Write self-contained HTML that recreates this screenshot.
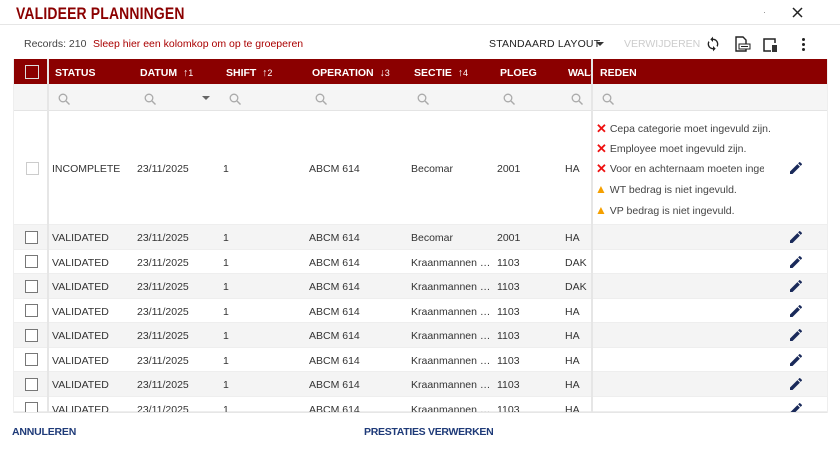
<!DOCTYPE html>
<html><head><meta charset="utf-8"><style>
*{box-sizing:border-box;margin:0;padding:0}
body{width:840px;height:450px;background:#fff;font-family:"Liberation Sans",sans-serif;position:relative;overflow:hidden;color:#333}
.a{position:absolute;white-space:nowrap}
.title{left:16px;top:4px;font-size:17px;font-weight:bold;color:#8b0000;transform:scaleX(.82);transform-origin:left;letter-spacing:.2px}
.hdr{left:13px;top:59px;width:815px;height:25px;background:#8b0000}
.h{color:#fff;font-size:10.5px;font-weight:bold;top:67px}
.fr{left:13px;top:84px;width:815px;height:27px;background:#f5f5f5;border-bottom:1px solid #e4e4e4}
.c{font-size:10.5px;color:#333}
.cb{width:13px;height:13px;border:1.5px solid #777;background:#fff}
.row{left:13px;width:815px;border-bottom:1px solid #eee}
.msg{font-size:10.5px;color:#444}
.x{color:#e11;font-size:13px;font-weight:bold;vertical-align:-1px}
</style></head><body>
<div class="a title">VALIDEER PLANNINGEN</div>
<div class="a" style="left:0;top:24px;width:840px;height:1px;background:#e6e6e6"></div>
<svg class="a" style="left:792px;top:7px" width="11" height="11" viewBox="0 0 11 11"><path d="M1 1l9 9M10 1l-9 9" stroke="#222" stroke-width="1.5"/></svg>
<div class="a" style="left:764px;top:12px;width:1px;height:1px;background:#999"></div>
<div class="a c" style="left:24px;top:38px;font-size:10.5px;color:#444">Records: 210</div>
<div class="a c" style="left:93px;top:38px;font-size:10.5px;color:#a00">Sleep hier een kolomkop om op te groeperen</div>
<div class="a" style="left:489px;top:38px;font-size:10.5px;color:#222;letter-spacing:.2px">STANDAARD LAYOUT</div>
<div class="a" style="left:596px;top:42px;width:0;height:0;border-left:4px solid transparent;border-right:4px solid transparent;border-top:4px solid #333"></div>
<div class="a" style="left:624px;top:38px;font-size:10.5px;color:#ccc">VERWIJDEREN</div>
<svg class="a" style="left:705px;top:36px" width="16" height="16" viewBox="0 0 24 24"><path fill="#222" d="M12 4V1L8 5l4 4V6c3.3 0 6 2.7 6 6 0 1-.3 2-.7 2.8l1.5 1.5C19.5 15 20 13.6 20 12c0-4.4-3.6-8-8-8zm0 14c-3.3 0-6-2.7-6-6 0-1 .3-2 .7-2.8L5.2 7.7C4.5 9 4 10.4 4 12c0 4.4 3.6 8 8 8v3l4-4-4-4v3z"/></svg>
<svg class="a" style="left:734px;top:36px" width="18" height="17" viewBox="0 0 18 17"><path fill="none" stroke="#222" stroke-width="1.4" d="M2 1h7l3 3v11H2z"/><rect x="5" y="8" width="11" height="5" fill="#fff" stroke="#222" stroke-width="1"/><path stroke="#222" stroke-width="1" d="M7 10.5h7"/></svg>
<svg class="a" style="left:762px;top:37px" width="17" height="16" viewBox="0 0 17 16"><path fill="none" stroke="#222" stroke-width="1.5" d="M9 14H2V2h11v4"/><rect x="10" y="8" width="5" height="7" fill="#333"/></svg>
<div class="a" style="left:802px;top:38px;width:3px;height:3px;background:#222;border-radius:50%;box-shadow:0 5px 0 #222,0 10px 0 #222"></div>

<div class="a hdr"></div>
<div class="a" style="left:25px;top:65px;width:14px;height:14px;border:1.5px solid #ddd;background:#8b0000"></div>
<div class="a" style="left:47px;top:59px;width:2px;height:354px;background:#e6e6e6;z-index:2"></div>
<div class="a" style="left:591px;top:59px;width:2px;height:354px;background:#e6e6e6;z-index:2"></div>
<div class="a h" style="left:55px">STATUS</div>
<div class="a h" style="left:140px">DATUM &nbsp;↑<span style="font-weight:normal;font-size:9px">1</span></div>
<div class="a h" style="left:226px">SHIFT &nbsp;↑<span style="font-weight:normal;font-size:9px">2</span></div>
<div class="a h" style="left:312px">OPERATION &nbsp;↓<span style="font-weight:normal;font-size:9px">3</span></div>
<div class="a h" style="left:414px">SECTIE &nbsp;↑<span style="font-weight:normal;font-size:9px">4</span></div>
<div class="a h" style="left:500px">PLOEG</div>
<div class="a h" style="left:568px;width:23px;overflow:hidden;letter-spacing:-.4px">WALS</div>
<div class="a h" style="left:600px">REDEN</div>

<div class="a fr"></div>
<svg width="0" height="0" style="position:absolute"><defs><g id="s"><circle cx="5" cy="5" r="3.8" fill="none" stroke="#aaa" stroke-width="1.3"/><path d="M8 8l3.5 3.5" stroke="#aaa" stroke-width="1.4"/></g></defs></svg>
<svg class="a" style="left:58px;top:93px" width="13" height="13"><use href="#s"/></svg>
<svg class="a" style="left:144px;top:93px" width="13" height="13"><use href="#s"/></svg>
<div class="a" style="left:202px;top:96px;border-left:4px solid transparent;border-right:4px solid transparent;border-top:4px solid #666"></div>
<svg class="a" style="left:229px;top:93px" width="13" height="13"><use href="#s"/></svg>
<svg class="a" style="left:315px;top:93px" width="13" height="13"><use href="#s"/></svg>
<svg class="a" style="left:417px;top:93px" width="13" height="13"><use href="#s"/></svg>
<svg class="a" style="left:503px;top:93px" width="13" height="13"><use href="#s"/></svg>
<svg class="a" style="left:571px;top:93px" width="13" height="13"><use href="#s"/></svg>
<svg class="a" style="left:602px;top:93px" width="13" height="13"><use href="#s"/></svg>

<svg width="0" height="0" style="position:absolute"><defs><g id="p"><path fill="#1a2a5a" d="M0 9.5V12h2.5l7.4-7.4-2.5-2.5zM11.8 2.7c.3-.3.3-.7 0-.9L10.2.2c-.3-.3-.7-.3-.9 0L8.1 1.4l2.5 2.5z"/></g></defs></svg>

<div class="a row" style="top:111px;height:114px;background:#fff"></div>
<div class="a cb" style="left:26px;top:162px;border-color:#ccc;border-width:1px"></div>
<div class="a c" style="left:52px;top:163px">INCOMPLETE</div>
<div class="a c" style="left:137px;top:163px">23/11/2025</div>
<div class="a c" style="left:223px;top:163px">1</div>
<div class="a c" style="left:309px;top:163px">ABCM 614</div>
<div class="a c" style="left:411px;top:163px">Becomar</div>
<div class="a c" style="left:497px;top:163px">2001</div>
<div class="a c" style="left:565px;top:163px">HA</div>
<div class="a msg" style="left:596px;top:121px"><span class="x">✕</span> Cepa categorie moet ingevuld zijn.</div>
<div class="a msg" style="left:596px;top:141px"><span class="x">✕</span> Employee moet ingevuld zijn.</div>
<div class="a msg" style="left:596px;top:161px;width:168px;overflow:hidden"><span class="x">✕</span> Voor en achternaam moeten ingevuld</div>
<div class="a msg" style="left:595px;top:182px"><span style="color:#f5a000;font-size:12px">▲</span> WT bedrag is niet ingevuld.</div>
<div class="a msg" style="left:595px;top:203px"><span style="color:#f5a000;font-size:12px">▲</span> VP bedrag is niet ingevuld.</div>
<svg class="a" style="left:790px;top:162px" width="12" height="12"><use href="#p"/></svg>

<div id="rows"></div>
<script>
var d=[["Becomar","2001","HA"],["Kraanmannen & c...","1103","DAK"],["Kraanmannen & c...","1103","DAK"],["Kraanmannen & c...","1103","HA"],["Kraanmannen & c...","1103","HA"],["Kraanmannen & c...","1103","HA"],["Kraanmannen & c...","1103","HA"],["Kraanmannen & c...","1103","HA"]];
var h="";
for(var i=0;i<8;i++){var t=225+i*24.5;var ty=t+7;var bg=i%2==0?"#f4f4f4":"#fff";var hh=i==7?(412-t):24.5;
h+='<div class="a row" style="top:'+t+'px;height:'+hh+'px;background:'+bg+'"></div>';
if(i<7)h+='<div class="a cb" style="left:25px;top:'+(t+5.5)+'px"></div>';else h+='<div class="a cb" style="left:25px;top:'+(t+5.5)+'px;height:'+(412-t-5.5)+'px;border-bottom:none"></div>';
var s=d[i][0];if(s.length>10)s='<span style="display:inline-block;width:82px;overflow:hidden;text-overflow:ellipsis;vertical-align:top">Kraanmannen &amp; cie</span>';
h+='<div class="a c" style="left:52px;top:'+ty+'px">VALIDATED</div><div class="a c" style="left:137px;top:'+ty+'px">23/11/2025</div><div class="a c" style="left:223px;top:'+ty+'px">1</div><div class="a c" style="left:309px;top:'+ty+'px">ABCM 614</div><div class="a c" style="left:411px;top:'+ty+'px">'+s+'</div><div class="a c" style="left:497px;top:'+ty+'px">'+d[i][1]+'</div><div class="a c" style="left:565px;top:'+ty+'px">'+d[i][2]+'</div>';
h+='<svg class="a" style="left:790px;top:'+(t+6)+'px;height:'+Math.min(12,412-t-6)+'px" width="12" height="12"><use href="#p"/></svg>';}
document.getElementById("rows").innerHTML=h;
</script>
<div class="a" style="left:13px;top:412px;width:815px;height:1px;background:#e6e6e6"></div>
<div class="a" style="left:13px;top:59px;width:1px;height:354px;background:#eee"></div>
<div class="a" style="left:827px;top:59px;width:1px;height:354px;background:#eee"></div>
<div class="a" style="left:0;top:413px;width:840px;height:37px;background:#fff"></div>
<div class="a" style="left:12px;top:426px;font-size:10.5px;font-weight:bold;color:#1e3a78;letter-spacing:-.2px">ANNULEREN</div>
<div class="a" style="left:364px;top:426px;font-size:10.5px;font-weight:bold;color:#1e3a78;letter-spacing:-.3px">PRESTATIES VERWERKEN</div>
</body></html>
